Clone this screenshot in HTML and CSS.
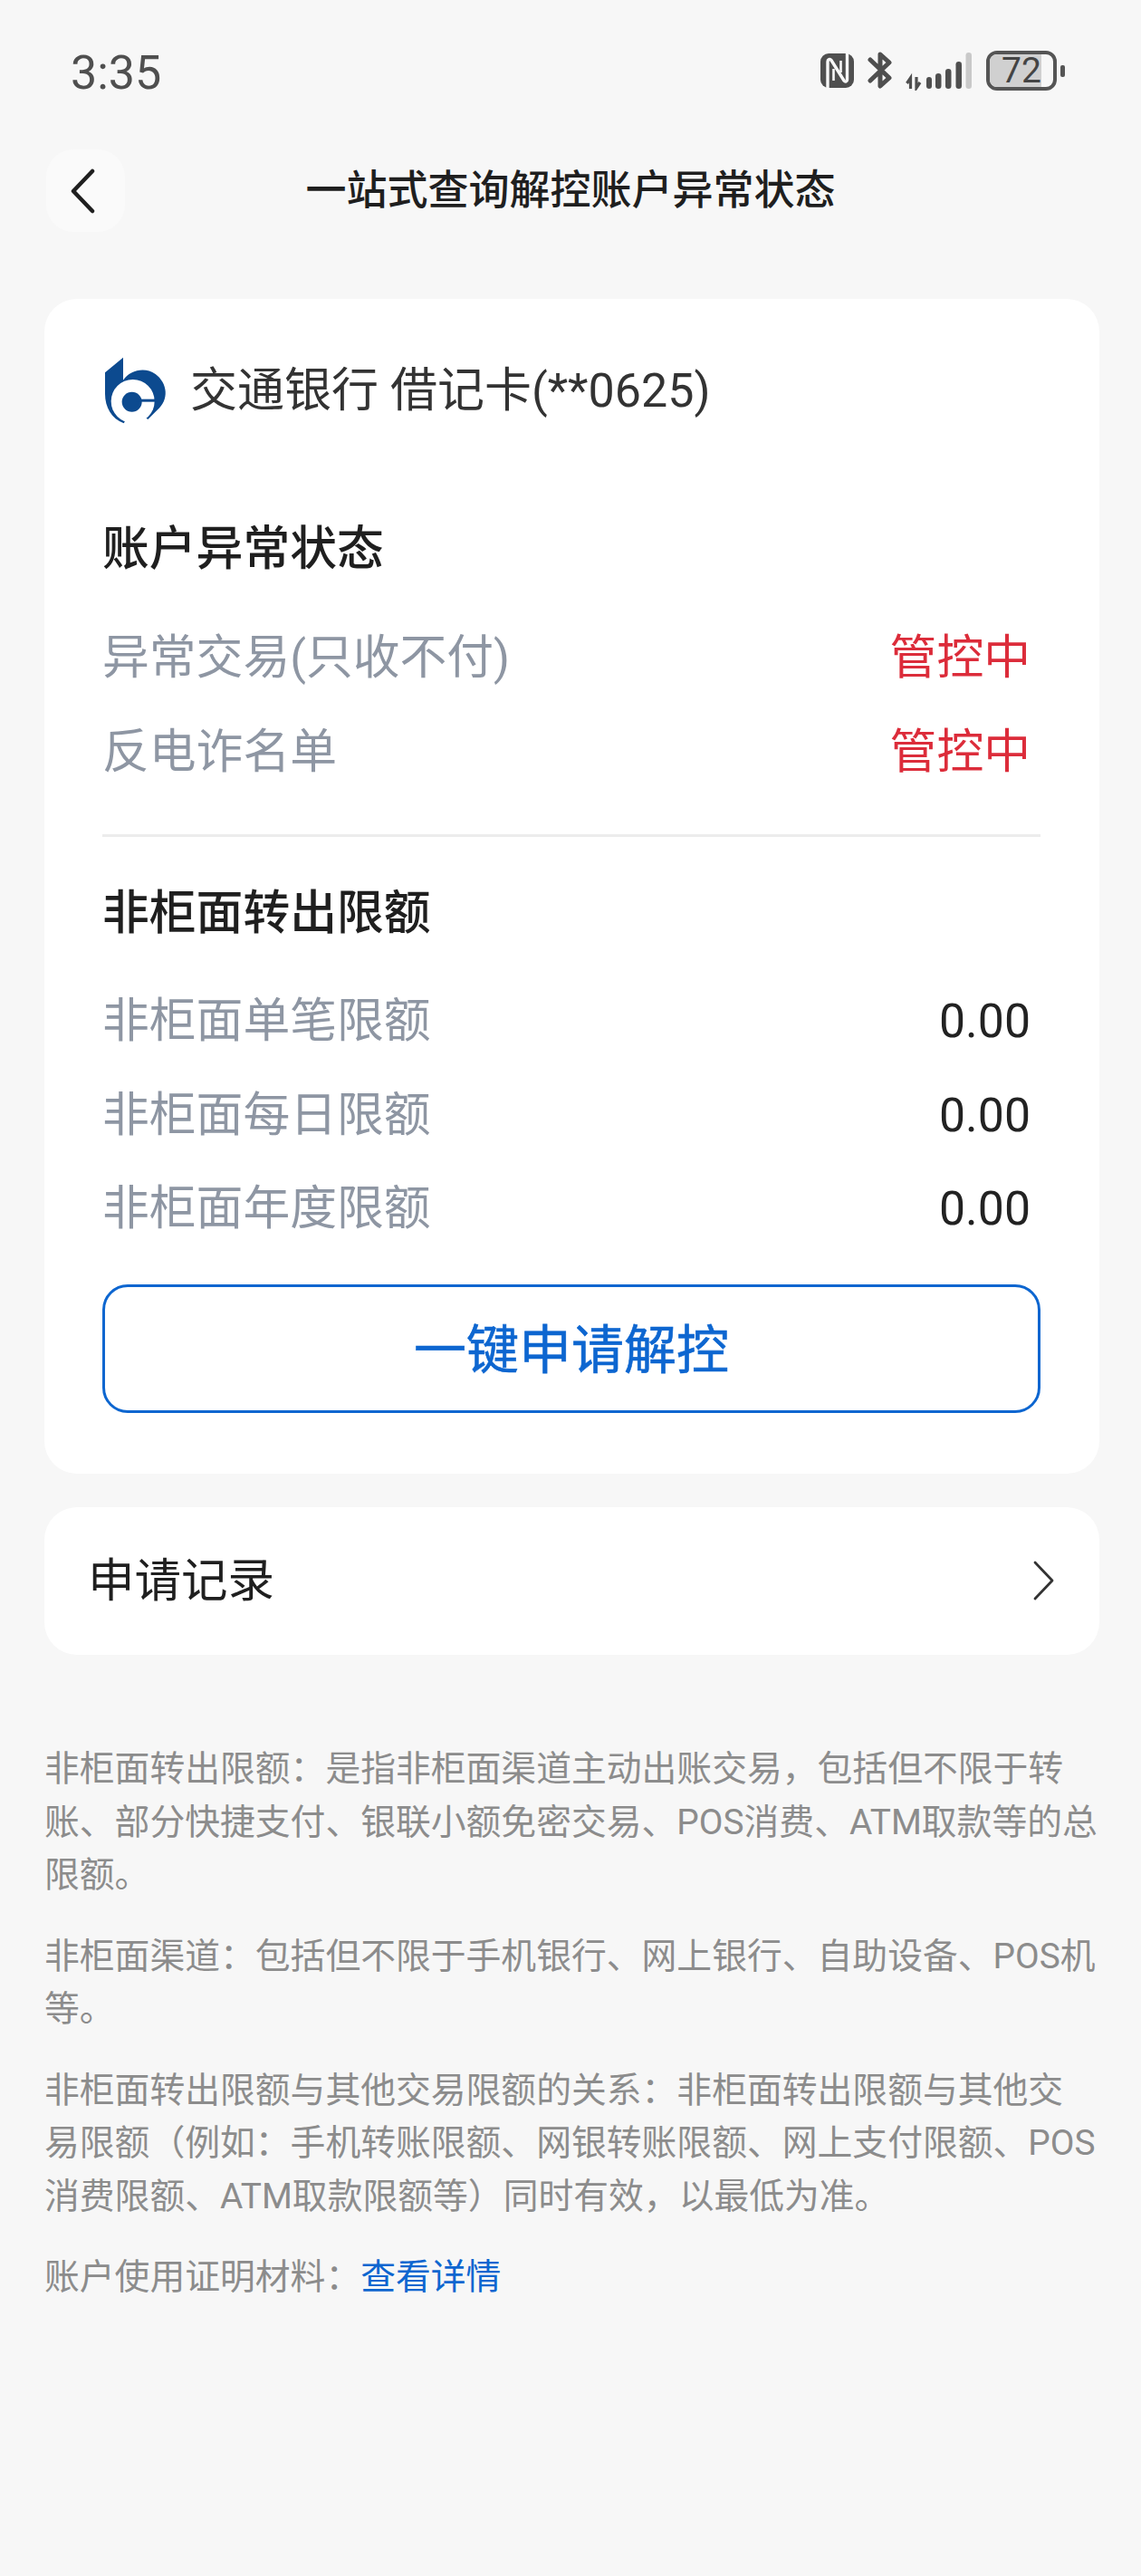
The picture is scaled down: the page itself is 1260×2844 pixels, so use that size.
FILE: index.html
```html
<!DOCTYPE html>
<html lang="zh-CN">
<head>
<meta charset="utf-8">
<title>一站式查询解控账户异常状态</title>
<link rel="stylesheet" href="styles.css">
</head>
<body>
<div class="page">
  <header class="status">
    <span class="time">3:35</span>
    <div class="status-icons">
      <svg class="ic-nfc" viewBox="0 0 37 38"><rect width="37" height="38" rx="9" fill="#4f4f4f"/><path d="M8 38V9c0-2.500 2.500-3.500 4-1.500L26 30c1.500 2 3.500 1 3.500-1V0" fill="none" stroke="#f7f7f7" stroke-width="3.400"/><path d="M14.500 17v13M22.500 8v13" fill="none" stroke="#f7f7f7" stroke-width="2.600"/></svg>
      <svg class="ic-bt" viewBox="0 0 27 41"><path d="M3 9l21 20-10 9V3l10 9L3 32" fill="none" stroke="#4f4f4f" stroke-width="5" stroke-linejoin="round" stroke-linecap="round"/></svg>
      <svg class="ic-signal" viewBox="0 0 73 42"><path d="M5.500 40V28L1.500 34M12 27v12l4-6" fill="none" stroke="#4f4f4f" stroke-width="3.200"/><rect x="23" y="27" width="6" height="13" rx="3" fill="#4f4f4f"/><rect x="33" y="23" width="6.500" height="17" rx="3.200" fill="#4f4f4f"/><rect x="44" y="18" width="6.500" height="22" rx="3.200" fill="#4f4f4f"/><rect x="55.500" y="10" width="6.500" height="30" rx="3.200" fill="#4f4f4f"/><rect x="66.500" y="0" width="6.500" height="40" rx="3.200" fill="#c9c9c9"/></svg>
      <div class="battery"><div class="battery-body"><div class="battery-fill"></div><span class="battery-num">72</span></div><div class="battery-nub"></div></div>
    </div>
  </header>

  <nav class="nav">
    <div class="back">
      <svg class="back-icon" viewBox="0 0 28 50"><path d="M25 3L4 25l21 22" fill="none" stroke="#1f1f1f" stroke-width="4.500" stroke-linecap="round" stroke-linejoin="round"/></svg>
    </div>
    <h1 class="nav-title">一站式查询解控账户异常状态</h1>
  </nav>

  <section class="card main-card">
    <div class="bank">
      <svg class="bank-logo" viewBox="0 0 240 252">
        <path d="M78 20V95C100 62 150 50 185 75C225 105 232 160 190 195L160 225L110 190L80 238C40 222 18 185 18 140V70Z" fill="#0c4a8f"/>
        <circle cx="110" cy="165" r="72" fill="#fff"/>
        <circle cx="107" cy="167" r="33" fill="#0c4a8f"/>
        <rect x="120" y="158" width="72" height="9" fill="#0c4a8f"/>
      </svg>
      <span class="bank-name">交通银行 借记卡(**0625)</span>
    </div>

    <h2 class="section-title first">账户异常状态</h2>
    <div class="row"><span class="row-label">异常交易(只收不付)</span><span class="row-value red">管控中</span></div>
    <div class="row"><span class="row-label">反电诈名单</span><span class="row-value red">管控中</span></div>

    <div class="divider"></div>

    <h2 class="section-title second">非柜面转出限额</h2>
    <div class="row"><span class="row-label">非柜面单笔限额</span><span class="row-value num">0.00</span></div>
    <div class="row"><span class="row-label">非柜面每日限额</span><span class="row-value num">0.00</span></div>
    <div class="row"><span class="row-label">非柜面年度限额</span><span class="row-value num">0.00</span></div>

    <div class="action">一键申请解控</div>
  </section>

  <section class="card record">
    <span class="record-label">申请记录</span>
    <svg class="record-arrow" viewBox="0 0 24 44"><path d="M2 2l19 20L2 42" fill="none" stroke="#333" stroke-width="2.800" stroke-linecap="round" stroke-linejoin="round"/></svg>
  </section>

  <section class="notes">
    <p>非柜面转出限额：是指非柜面渠道主动出账交易，包括但不限于转账、部分快捷支付、银联小额免密交易、POS消费、ATM取款等的总限额。</p>
    <p>非柜面渠道：包括但不限于手机银行、网上银行、自助设备、POS机等。</p>
    <p>非柜面转出限额与其他交易限额的关系：非柜面转出限额与其他交易限额（例如：手机转账限额、网银转账限额、网上支付限额、POS消费限额、ATM取款限额等）同时有效，以最低为准。</p>
    <p>账户使用证明材料：<span class="link">查看详情</span></p>
  </section>
</div>
</body>
</html>
```
FILE: styles.css
```css
* { box-sizing: border-box; }
html, body { margin: 0; padding: 0; }
body {
  background: #f7f7f7;
  font-family: Roboto, "Noto Sans CJK SC", sans-serif;
  color: #1f1f1f;
}
.page {
  width: 1260px;
  height: 2844px;
  overflow: hidden;
  display: flex;
  flex-direction: column;
}
.status {
  height: 156px;
  padding: 53px 84px 0 78px;
  display: flex;
  justify-content: space-between;
  align-items: flex-start;
}
.time {
  font-size: 52px;
  line-height: 56px;
  color: #4f4f4f;
  font-weight: 400;
}
.status-icons {
  display: flex;
  align-items: flex-start;
  margin-top: 3px;
}
.ic-nfc { width: 37px; height: 38px; margin-top: 3px; }
.ic-bt { width: 27px; height: 41px; margin-left: 15px; margin-top: 1px; }
.ic-signal { width: 73px; height: 42px; margin-left: 15px; margin-top: 2px; }
.battery { display: flex; align-items: center; margin-left: 16px; }
.battery-body {
  position: relative;
  width: 78px;
  height: 44px;
  border: 4px solid #555;
  border-radius: 12px;
  display: flex;
  align-items: center;
  justify-content: center;
  overflow: hidden;
}
.battery-fill {
  position: absolute;
  left: 0; top: 0; bottom: 0;
  width: 81%;
  background: #d0d0d0;
}
.battery-num {
  position: relative;
  font-size: 39px;
  line-height: 36px;
  font-weight: 400;
  color: #444;
}
.battery-nub {
  width: 5px;
  height: 13px;
  margin-left: 4px;
  border-radius: 2px;
  background: #555;
}
.nav {
  height: 91px;
  margin-top: 9px;
  padding-left: 51px;
  position: relative;
  display: flex;
  align-items: center;
}
.back {
  width: 87px;
  height: 91px;
  border-radius: 30px;
  background: #fafafa;
  display: flex;
  align-items: center;
  padding-left: 26px;
}
.back-icon { width: 28px; height: 50px; }
.nav-title {
  margin: 0;
  position: absolute;
  left: 0; right: 0; top: 0;
  text-align: center;
  font-size: 45px;
  line-height: 91px;
  font-weight: 500;
  color: #1f1f1f;
  pointer-events: none;
}
.card {
  background: #fff;
  border-radius: 36px;
  margin: 0 46px 0 49px;
}
.main-card {
  margin-top: 74px;
  height: 1297px;
  padding: 50px 65px 0 64px;
}
.bank {
  height: 100px;
  display: flex;
  align-items: center;
}
.bank-logo { width: 80px; height: 84px; margin-left: -3px; }
.bank-name {
  margin-left: 20px;
  padding-top: 3px;
  font-size: 52px;
  line-height: 60px;
  color: #333;
}
.section-title {
  margin: 0;
  font-size: 51.800px;
  line-height: 60px;
  font-weight: 500;
  color: #1f1f1f;
}
.section-title.first { margin: 97px 0 37px; }
.section-title.second { margin: 55px 0 36px; }
.row {
  height: 103.500px;
  padding: 0 11px 8px 0;
  display: flex;
  align-items: center;
  justify-content: space-between;
  font-size: 51.800px;
}
.row-label { color: #8e96a3; }
.row-value { color: #222; }
.row-value.red { color: #dc2c3a; }
.row-value.num { margin-top: 10px; }
.divider {
  height: 3px;
  margin-top: 40px;
  background: #ececec;
}
.action {
  margin-top: 32px;
  height: 142px;
  padding-bottom: 6px;
  border: 3.500px solid #0d66d0;
  border-radius: 28px;
  display: flex;
  align-items: center;
  justify-content: center;
  font-size: 58px;
  font-weight: 400;
  -webkit-text-stroke: 0.6px #0d66d0;
  color: #0d66d0;
}
.record {
  margin-top: 37px;
  height: 163px;
  padding: 0 49px 10px 48px;
  display: flex;
  align-items: center;
  justify-content: space-between;
}
.record-label { font-size: 51.500px; color: #1f1f1f; }
.record-arrow { width: 24px; height: 44px; margin-top: 8px; }
.notes {
  margin: 97px 48px 0 49px;
  font-size: 38.800px;
  line-height: 58.500px;
  color: #8c8c8c;
}
.notes p { margin: 0 0 31px; }
.link { color: #0d66d0; }
```
